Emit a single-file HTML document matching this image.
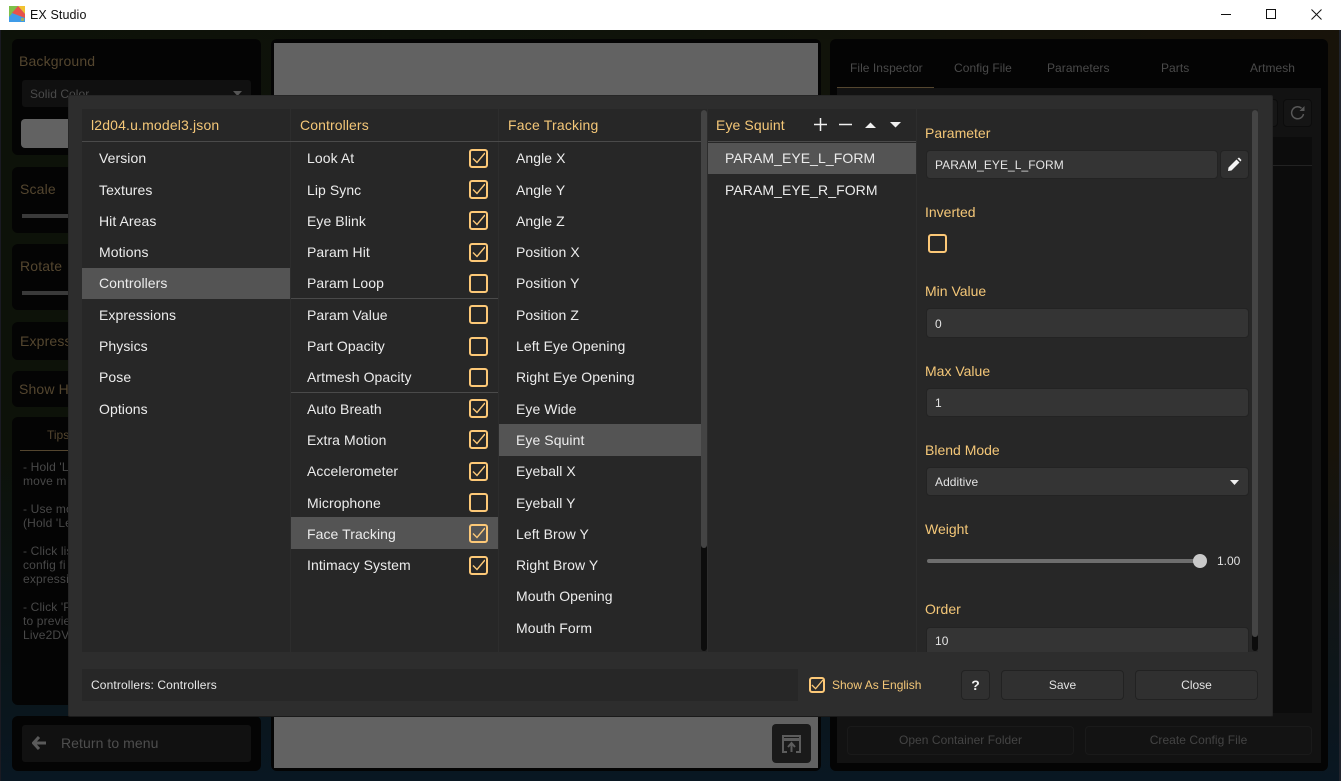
<!DOCTYPE html>
<html><head><meta charset="utf-8"><title>EX Studio</title>
<style>
html,body{margin:0;padding:0;width:1341px;height:781px;overflow:hidden;background:#0a0d0c}
body{position:relative;font-family:"Liberation Sans",sans-serif;font-size:14px;color:#e8e8e8}
div,span,svg{position:absolute;box-sizing:border-box}
.t{white-space:nowrap}
.bgp{background:#040404;border-radius:6px}
.dim{color:#54462f;font-size:14px;white-space:nowrap;letter-spacing:.15px}
.dg{color:#4a4a4a;font-size:12px;white-space:nowrap;letter-spacing:.05px}
.tip{left:23px;color:#484848;font-size:12px;line-height:14px;white-space:nowrap;width:45px;overflow:hidden;letter-spacing:.15px}
.col{background:#272727;top:109px;height:543px}
.h{top:117px;color:#f4c778;font-size:14px;line-height:16px;white-space:nowrap;letter-spacing:.1px}
.r{height:31px;line-height:31px;font-size:14px;white-space:nowrap;color:#ececec;letter-spacing:.07px}
.sel{background:#545454;height:31px}
.line{height:1px;background:#4a4a4a}
.cb{left:469px;width:19px;height:19px;border:2px solid #fcc877;border-radius:3px}
.cb svg{left:1px;top:1px}
.lab{left:925px;color:#f4c778;font-size:14px;line-height:16px;white-space:nowrap}
.inp{background:#343434;border:1px solid #232323;border-radius:4px;left:926px;width:323px;color:#e4e4e4;font-size:12px;padding-left:8px;letter-spacing:.06px}
.btn{background:#303030;border:1px solid #222;border-radius:4px;text-align:center;color:#e4e4e4;font-size:12px}
</style></head><body>

<!-- window background -->
<div style="left:1px;top:30px;width:1338px;height:751px;background:linear-gradient(180deg,rgba(9,23,34,0) 55%,#091722 100%),linear-gradient(90deg,#0d1209 0%,#0f130a 50%,#18130a 100%)"></div>
<div style="left:1339px;top:30px;width:2px;height:751px;background:#20232c"></div>
<div style="left:0;top:30px;width:1px;height:751px;background:#1a1a22"></div>

<!-- title bar -->
<div style="left:0;top:0;width:1341px;height:30px;background:#fff"></div>
<svg style="left:9px;top:6px" width="16" height="16" viewBox="0 0 16 16"><rect width="16" height="16" fill="#3f9be8"/><polygon points="0,0 9,0 0,11" fill="#7ec04a"/><polygon points="9,0 16,0 16,8" fill="#f2c230"/><polygon points="9,0 16,8 16,12 3,7" fill="#e8524a"/><rect x="12" y="12" width="3" height="3" fill="#a0b060"/></svg>
<div class="t" style="left:30px;top:7px;font-size:12.5px;line-height:16px;color:#111;letter-spacing:.1px">EX Studio</div>
<svg style="left:1221px;top:8px" width="110" height="14" viewBox="0 0 110 14" fill="none" stroke="#111" stroke-width="1"><path d="M0 6.500H10"/><rect x="45.500" y="1.500" width="9" height="9"/><path d="M90.500 1.500L100.500 11.500M100.500 1.500L90.500 11.500"/></svg>

<!-- background left panels -->
<div class="bgp" style="left:12px;top:39px;width:249px;height:116px"></div>
<div class="dim" style="left:19px;top:53px">Background</div>
<div style="left:22px;top:80px;width:229px;height:27px;background:#101010;border-radius:3px"></div>
<div class="dg" style="left:30px;top:87px">Solid Color</div>
<svg style="left:233px;top:91px" width="9" height="5" viewBox="0 0 9 5"><path d="M0 0H9L4.500 5Z" fill="#555"/></svg>
<div style="left:21px;top:119px;width:60px;height:29px;background:#626262;border-radius:4px"></div>
<div class="bgp" style="left:12px;top:167px;width:249px;height:66px"></div>
<div class="dim" style="left:20px;top:181px">Scale</div>
<div style="left:22px;top:214px;width:60px;height:4px;background:#3a3a3a"></div>
<div class="bgp" style="left:12px;top:244px;width:249px;height:66px"></div>
<div class="dim" style="left:20px;top:258px">Rotate</div>
<div style="left:22px;top:291px;width:60px;height:4px;background:#3a3a3a"></div>
<div class="bgp" style="left:12px;top:322px;width:249px;height:38px"></div>
<div class="dim" style="left:20px;top:333px">Express</div>
<div class="bgp" style="left:12px;top:371px;width:249px;height:36px"></div>
<div class="dim" style="left:19px;top:381px">Show H</div>
<div class="bgp" style="left:12px;top:417px;width:249px;height:288px"></div>
<div class="t" style="left:47px;top:428px;font-size:12px;color:#54462f">Tips</div>
<div style="left:20px;top:450px;width:60px;height:1px;background:#54462f"></div>
<div class="tip" style="top:460px">- Hold 'L<br>move m</div>
<div class="tip" style="top:502px">- Use mo<br>(Hold 'Le</div>
<div class="tip" style="top:544px">- Click lis<br>config fi<br>expressi</div>
<div class="tip" style="top:600px">- Click 'P<br>to previe<br>Live2DV</div>
<div class="bgp" style="left:12px;top:716px;width:249px;height:55px"></div>
<div style="left:22px;top:725px;width:229px;height:37px;background:#111;border-radius:3px"></div>
<svg style="left:32px;top:736px" width="15" height="14" viewBox="0 0 15 14"><path d="M7 1L1.500 7L7 13M2 7H14" fill="none" stroke="#5a5a5a" stroke-width="3"/></svg>
<div class="t" style="left:61px;top:735px;font-size:14px;line-height:16px;color:#4e4e4e;letter-spacing:.07px">Return to menu</div>

<!-- center -->
<div class="bgp" style="left:271px;top:39px;width:550px;height:732px"></div>
<div style="left:274px;top:43px;width:544px;height:725px;background:#626262"></div>
<div style="left:772px;top:724px;width:39px;height:39px;background:#1a1a1a;border-radius:4px"></div>
<svg style="left:781px;top:734px" width="21" height="20" viewBox="0 0 21 20" fill="none" stroke="#5c5c5c" stroke-width="2"><path d="M6 18H2V2H19V18H15"/><path d="M2 5.500H19" stroke-width="3"/><path d="M10.500 18V10M7 13L10.500 9L14 13"/></svg>

<!-- right panel -->
<div class="bgp" style="left:830px;top:39px;width:498px;height:732px"></div>
<div style="left:837px;top:88px;width:484px;height:675px;background:#121212"></div>
<div style="left:1240px;top:137px;width:72px;height:576px;background:#0c0c0c"></div>
<div style="left:1240px;top:165px;width:72px;height:1px;background:#222"></div>
<div style="left:1240px;top:99px;width:38px;height:28px;background:#161616;border:1px solid #0c0c0c;border-radius:4px"></div>
<div class="dg" style="left:850px;top:61px">File Inspector</div>
<div class="dg" style="left:954px;top:61px">Config File</div>
<div class="dg" style="left:1047px;top:61px">Parameters</div>
<div class="dg" style="left:1161px;top:61px">Parts</div>
<div class="dg" style="left:1250px;top:61px">Artmesh</div>
<div style="left:837px;top:87px;width:97px;height:1px;background:#54462f"></div>
<div style="left:1283px;top:99px;width:29px;height:28px;background:#151515;border:1px solid #0c0c0c;border-radius:4px"></div>
<svg style="left:1290px;top:105px" width="16" height="16" viewBox="0 0 16 16" fill="none" stroke="#585858" stroke-width="1.500"><path d="M13.500 9A6 6 0 1 1 11.500 3.200"/><path d="M9.500 6H14.500V1Z" fill="#585858" stroke="none"/></svg>
<div style="left:847px;top:726px;width:227px;height:29px;background:#131313;border:1px solid #1a1a1a;border-radius:4px"></div>
<div class="dg" style="left:847px;top:733px;width:227px;text-align:center;color:#444">Open Container Folder</div>
<div style="left:1085px;top:726px;width:227px;height:29px;background:#131313;border:1px solid #1a1a1a;border-radius:4px"></div>
<div class="dg" style="left:1085px;top:733px;width:227px;text-align:center;color:#444">Create Config File</div>

<!-- dialog -->
<div style="left:68px;top:95px;width:1205px;height:622px;background:#2d2d2d;border-radius:2px;border:1px solid #262626;border-bottom-color:#1a1a1a"></div>
<div class="col" style="left:82px;width:208px"></div>
<div class="col" style="left:291px;width:207px"></div>
<div class="col" style="left:499px;width:208px"></div>
<div class="col" style="left:708px;width:208px"></div>
<div class="col" style="left:917px;width:341px"></div>
<div class="line" style="left:82px;top:141px;width:619px"></div>
<div class="line" style="left:708px;top:141px;width:208px"></div>

<!-- col 1 -->
<div class="h" style="left:91px;letter-spacing:.16px">l2d04.u.model3.json</div>
<div class="sel" style="left:82px;top:268px;width:208px"></div>
<div class="r" style="left:99px;top:143px">Version</div>
<div class="r" style="left:99px;top:175px">Textures</div>
<div class="r" style="left:99px;top:206px">Hit Areas</div>
<div class="r" style="left:99px;top:237px">Motions</div>
<div class="r" style="left:99px;top:268px">Controllers</div>
<div class="r" style="left:99px;top:300px">Expressions</div>
<div class="r" style="left:99px;top:331px">Physics</div>
<div class="r" style="left:99px;top:362px">Pose</div>
<div class="r" style="left:99px;top:394px">Options</div>

<!-- col 2 -->
<div class="h" style="left:300px">Controllers</div>
<div class="sel" style="left:291px;top:517px;width:207px;height:32px"></div>
<div class="line" style="left:291px;top:298px;width:207px"></div>
<div class="line" style="left:291px;top:392px;width:207px"></div>
<div class="r" style="left:307px;top:143px">Look At</div>
<div class="r" style="left:307px;top:175px">Lip Sync</div>
<div class="r" style="left:307px;top:206px">Eye Blink</div>
<div class="r" style="left:307px;top:237px">Param Hit</div>
<div class="r" style="left:307px;top:268px">Param Loop</div>
<div class="r" style="left:307px;top:300px">Param Value</div>
<div class="r" style="left:307px;top:331px">Part Opacity</div>
<div class="r" style="left:307px;top:362px">Artmesh Opacity</div>
<div class="r" style="left:307px;top:394px">Auto Breath</div>
<div class="r" style="left:307px;top:425px">Extra Motion</div>
<div class="r" style="left:307px;top:456px">Accelerometer</div>
<div class="r" style="left:307px;top:488px">Microphone</div>
<div class="r" style="left:307px;top:519px">Face Tracking</div>
<div class="r" style="left:307px;top:550px">Intimacy System</div>

<div class="cb" style="top:149px"><svg width="13" height="13" viewBox="0 0 13 13"><path d="M1 6.500L5 10.500L13 1" fill="none" stroke="#fcc877" stroke-width="1.400"/></svg></div>
<div class="cb" style="top:180px"><svg width="13" height="13" viewBox="0 0 13 13"><path d="M1 6.500L5 10.500L13 1" fill="none" stroke="#fcc877" stroke-width="1.400"/></svg></div>
<div class="cb" style="top:211px"><svg width="13" height="13" viewBox="0 0 13 13"><path d="M1 6.500L5 10.500L13 1" fill="none" stroke="#fcc877" stroke-width="1.400"/></svg></div>
<div class="cb" style="top:243px"><svg width="13" height="13" viewBox="0 0 13 13"><path d="M1 6.500L5 10.500L13 1" fill="none" stroke="#fcc877" stroke-width="1.400"/></svg></div>
<div class="cb" style="top:274px"></div>
<div class="cb" style="top:305px"></div>
<div class="cb" style="top:337px"></div>
<div class="cb" style="top:368px"></div>
<div class="cb" style="top:399px"><svg width="13" height="13" viewBox="0 0 13 13"><path d="M1 6.500L5 10.500L13 1" fill="none" stroke="#fcc877" stroke-width="1.400"/></svg></div>
<div class="cb" style="top:430px"><svg width="13" height="13" viewBox="0 0 13 13"><path d="M1 6.500L5 10.500L13 1" fill="none" stroke="#fcc877" stroke-width="1.400"/></svg></div>
<div class="cb" style="top:462px"><svg width="13" height="13" viewBox="0 0 13 13"><path d="M1 6.500L5 10.500L13 1" fill="none" stroke="#fcc877" stroke-width="1.400"/></svg></div>
<div class="cb" style="top:493px"></div>
<div class="cb" style="top:524px"><svg width="13" height="13" viewBox="0 0 13 13"><path d="M1 6.500L5 10.500L13 1" fill="none" stroke="#fcc877" stroke-width="1.400"/></svg></div>
<div class="cb" style="top:556px"><svg width="13" height="13" viewBox="0 0 13 13"><path d="M1 6.500L5 10.500L13 1" fill="none" stroke="#fcc877" stroke-width="1.400"/></svg></div>

<!-- col 3 -->
<div class="h" style="left:508px;letter-spacing:.2px">Face Tracking</div>
<div class="sel" style="left:499px;top:424px;width:202px;height:32px"></div>
<div class="r" style="left:516px;top:143px">Angle X</div>
<div class="r" style="left:516px;top:175px">Angle Y</div>
<div class="r" style="left:516px;top:206px">Angle Z</div>
<div class="r" style="left:516px;top:237px">Position X</div>
<div class="r" style="left:516px;top:268px">Position Y</div>
<div class="r" style="left:516px;top:300px">Position Z</div>
<div class="r" style="left:516px;top:331px">Left Eye Opening</div>
<div class="r" style="left:516px;top:362px">Right Eye Opening</div>
<div class="r" style="left:516px;top:394px">Eye Wide</div>
<div class="r" style="left:516px;top:425px">Eye Squint</div>
<div class="r" style="left:516px;top:456px">Eyeball X</div>
<div class="r" style="left:516px;top:488px">Eyeball Y</div>
<div class="r" style="left:516px;top:519px">Left Brow Y</div>
<div class="r" style="left:516px;top:550px">Right Brow Y</div>
<div class="r" style="left:516px;top:581px">Mouth Opening</div>
<div class="r" style="left:516px;top:613px">Mouth Form</div>
<div style="left:701px;top:110px;width:6px;height:541px;background:#0c0c0c;border-radius:3px"></div>
<div style="left:701px;top:110px;width:6px;height:438px;background:#444;border-radius:3px"></div>

<!-- col 4 -->
<div class="h" style="left:716px">Eye Squint</div>
<svg style="left:813px;top:117px" width="90" height="16" viewBox="0 0 90 16"><path d="M1 7.500H14M7.500 1V14M26 7.500H39" fill="none" stroke="#f0f0f0" stroke-width="1.500"/><path d="M52 11L57.500 5.500L63 11ZM77 5L88 5L82.500 10.500Z" fill="#f0f0f0"/></svg>
<div class="sel" style="left:708px;top:143px;width:208px;height:31px"></div>
<div class="r" style="left:725px;top:143px">PARAM_EYE_L_FORM</div>
<div class="r" style="left:725px;top:175px">PARAM_EYE_R_FORM</div>

<!-- col 5 -->
<div class="lab" style="top:125px">Parameter</div>
<div class="inp" style="top:150px;width:292px;height:29px;line-height:28px">PARAM_EYE_L_FORM</div>
<div class="btn" style="left:1220px;top:150px;width:29px;height:29px"></div>
<svg style="left:1227px;top:157px" width="15" height="15" viewBox="0 0 15 15"><path d="M1 14L1.500 10.500L9.500 2.500L12.500 5.500L4.500 13.500ZM10.500 1.500L12 0.500L14.500 3L13.500 4.500Z" fill="#f4f4f4"/></svg>
<div class="lab" style="top:204px">Inverted</div>
<div class="cb" style="left:928px;top:234px"></div>
<div class="lab" style="top:283px">Min Value</div>
<div class="inp" style="top:308px;height:30px;line-height:30px">0</div>
<div class="lab" style="top:363px">Max Value</div>
<div class="inp" style="top:388px;height:29px;line-height:28px">1</div>
<div class="lab" style="top:442px">Blend Mode</div>
<div class="inp" style="top:467px;height:29px;line-height:28px">Additive</div>
<svg style="left:1230px;top:480px" width="9" height="5" viewBox="0 0 9 5"><path d="M0 0H9L4.500 5Z" fill="#f0f0f0"/></svg>
<div class="lab" style="top:521px">Weight</div>
<div style="left:927px;top:559px;width:270px;height:4px;background:#6e6e6e;border-radius:2px"></div>
<div style="left:1193px;top:554px;width:14px;height:14px;background:#c9c9c9;border-radius:50%"></div>
<div class="t" style="left:1217px;top:554px;font-size:12px;line-height:14px;color:#e0e0e0">1.00</div>
<div class="lab" style="top:601px">Order</div>
<div class="inp" style="top:627px;height:25px;line-height:27px;border-bottom:0;border-radius:4px 4px 0 0">10</div>
<div style="left:1252px;top:110px;width:6px;height:541px;background:#0c0c0c;border-radius:3px"></div>
<div style="left:1252px;top:110px;width:6px;height:527px;background:#444;border-radius:3px"></div>

<!-- footer -->
<div style="left:82px;top:669px;width:716px;height:32px;background:#272727"></div>
<div class="t" style="left:91px;top:677px;font-size:12px;line-height:16px;color:#e8e8e8;letter-spacing:.13px">Controllers: Controllers</div>
<div class="cb" style="left:809px;top:677px;width:16px;height:16px"><svg style="left:0;top:0" width="12" height="12" viewBox="0 0 13 13"><path d="M1 6.500L5 10.500L13 1" fill="none" stroke="#fcc877" stroke-width="1.400"/></svg></div>
<div class="t" style="left:832px;top:677px;font-size:12px;line-height:16px;color:#f4c778">Show As English</div>
<div class="btn" style="left:961px;top:670px;width:29px;height:30px;line-height:28px;font-size:14px;font-weight:bold;color:#f0f0f0">?</div>
<div class="btn" style="left:1001px;top:670px;width:123px;height:30px;line-height:28px">Save</div>
<div class="btn" style="left:1135px;top:670px;width:123px;height:30px;line-height:28px">Close</div>
</body></html>
